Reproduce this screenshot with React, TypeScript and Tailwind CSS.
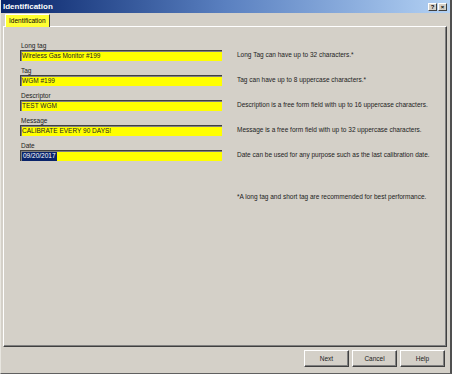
import React from "react";

const fields = [
  { label: "Long tag", value: "Wireless Gas Monitor #199", desc: "Long Tag can have up to 32 characters.*" },
  { label: "Tag", value: "WGM #199", desc: "Tag can have up to 8 uppercase characters.*" },
  { label: "Descriptor", value: "TEST WGM", desc: "Description is a free form field with up to 16 uppercase characters." },
  { label: "Message", value: "CALIBRATE EVERY 90 DAYS!", desc: "Message is a free form field with up to 32 uppercase characters." },
  { label: "Date", value: "09/20/2017", desc: "Date can be used for any purpose such as the last calibration date.", selected: true },
];

function Btn({ children }: { children: React.ReactNode }) {
  return (
    <div className="w-[45px] h-[17px] bg-[#d4d0c8] border-t border-l border-t-white border-l-white border-r border-b border-r-[#404040] border-b-[#404040] shadow-[inset_-1px_-1px_0_#808080] flex items-center justify-center text-[6.5px] text-[#222]">
      {children}
    </div>
  );
}

export default function App() {
  return (
    <div
      className="w-[452px] h-[374px] bg-[#d4d0c8] flex flex-col overflow-hidden border-l border-l-[#e8e6e0] border-r-2 border-r-[#505050] border-b border-b-[#606060]"
      style={{ fontFamily: '"Liberation Sans", Arial, sans-serif' }}
    >
      {/* Title bar */}
      <div className="h-[13px] flex items-center justify-between pl-[2px] pr-[3px] bg-gradient-to-r from-[#0a246a] via-[#5a80c0] to-[#b4d2f4]">
        <span className="text-white font-bold text-[8px] leading-none">Identification</span>
        <div className="flex gap-[1px]">
          <div className="w-[9px] h-[8px] bg-[#d4d0c8] border-t border-l border-white border-r border-b border-r-[#404040] border-b-[#404040] flex items-center justify-center text-[6px] font-bold leading-none text-black">?</div>
          <div className="w-[9px] h-[8px] bg-[#d4d0c8] border-t border-l border-white border-r border-b border-r-[#404040] border-b-[#404040] flex items-center justify-center text-[6px] font-bold leading-none text-black">×</div>
        </div>
      </div>
      {/* Tab row */}
      <div className="h-[13px] pl-[4px] pt-[1px] flex">
        <div className="w-[45px] h-[13px] bg-[#ffff33] border-t border-l border-t-white border-l-white border-r border-r-[#404040] flex items-center pl-[3px] text-[6.5px] text-black leading-none relative z-10">
          Identification
        </div>
      </div>
      {/* Panel */}
      <div className="ml-[2px] mr-[3px] h-[321px] border-t border-l border-t-white border-l-white border-r border-b border-r-[#404040] border-b-[#404040] shadow-[inset_-1px_-1px_0_#808080] pt-[9px] pl-[16px] flex flex-col">
        {fields.map((f) => (
          <div key={f.label} className="flex items-end h-[25px]">
            <div className="w-[202px] flex flex-col">
              <div className="text-[6.5px] leading-[8px] text-[#222] pl-[1px]">{f.label}</div>
              <div className="h-[11px] bg-[#ffff00] border-t border-l border-[#404040] shadow-[inset_1px_1px_0_#808080] flex items-center pl-[1px] text-[6.5px] text-[#222] leading-none">
                {f.selected ? (
                  <span className="bg-[#0a246a] text-white px-[1px] h-[9px] flex items-center">{f.value}</span>
                ) : (
                  f.value
                )}
              </div>
            </div>
            <div className="ml-[15px] h-[11px] flex items-center text-[6.5px] text-[#222] leading-none">{f.desc}</div>
          </div>
        ))}
        <div className="ml-[217px] mt-[33px] text-[6.5px] text-[#222] leading-none">
          *A long tag and short tag are recommended for best performance.
        </div>
      </div>
      {/* Buttons */}
      <div className="flex justify-end gap-[3px] pr-[5px] pt-[3px]">
        <Btn>Next</Btn>
        <Btn>Cancel</Btn>
        <Btn>Help</Btn>
      </div>
    </div>
  );
}
